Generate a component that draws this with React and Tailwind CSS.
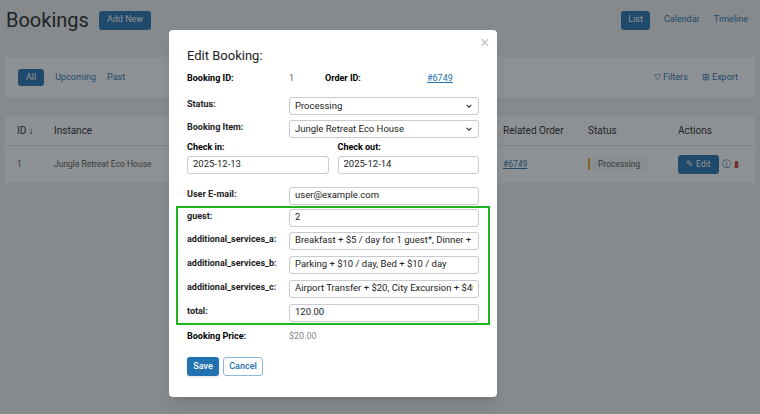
import React from "react";

const F = { fontFamily: "Roboto, 'Liberation Sans', sans-serif" };

function Field({ label, children, mb = "mb-[5px]" }) {
  return (
    <div className={"flex items-start h-[18px] " + mb}>
      <div className="w-[102px] shrink-0 text-[9px] font-bold text-[#222] pt-[1px] whitespace-nowrap">{label}</div>
      <div className="flex-1 min-w-0">{children}</div>
    </div>
  );
}
function Input({ v, sel }) {
  return (
    <div className="h-[18px] border border-[#c9cbcf] rounded-[3px] flex items-center px-[5px] text-[9.5px] text-[#222] overflow-hidden whitespace-nowrap min-w-0">
      <span className="flex-1 overflow-hidden">{v}</span>
      {sel && (
        <svg width="8" height="8" viewBox="0 0 10 10"><path d="M2 3.5l3 3 3-3" stroke="#333" strokeWidth="1.3" fill="none" /></svg>
      )}
    </div>
  );
}

export default function App() {
  return (
    <div style={F} className="relative w-[760px] h-[414px] bg-[#f0f0f1] overflow-hidden">
      <div className="flex items-center justify-between px-[6px] pt-[5px]">
        <div className="flex items-center gap-[10px]">
          <div className="text-[20px] text-[#1d2327]">Bookings</div>
          <div className="bg-[#2271b1] text-white text-[9px] rounded-[3px] px-[8px] h-[19px] flex items-center">Add New</div>
        </div>
        <div className="flex items-center gap-[14px] text-[9px] text-[#2271b1] pr-[6px]">
          <div className="bg-[#2271b1] text-white rounded-[3px] px-[7px] h-[19px] flex items-center">List</div>
          <span>Calendar</span><span>Timeline</span>
        </div>
      </div>
      <div className="mx-[5px] mt-[22px] h-[41px] bg-white rounded-[4px] flex items-center justify-between px-[13px] text-[9px] text-[#2271b1]">
        <div className="flex items-center gap-[11px]">
          <div className="bg-[#2271b1] text-white rounded-[3px] px-[8px] h-[17px] flex items-center">All</div>
          <span>Upcoming</span><span>Past</span>
        </div>
        <div className="flex gap-[14px] pr-[4px]"><span>▽ Filters</span><span>⊞ Export</span></div>
      </div>
      <div className="mx-[5px] mt-[18px] h-[67px] bg-white rounded-[4px] text-[10px] text-[#1d2327]">
        <div className="h-[30px] flex items-center px-[12px] border-b border-[#e5e5e5]">
          <span className="w-[37px]">ID ↓</span><span>Instance</span>
          <span className="ml-auto w-[85px]">Related Order</span><span className="w-[90px]">Status</span><span className="w-[65px]">Actions</span>
        </div>
        <div className="h-[36px] flex items-center px-[12px] text-[8.5px] text-[#555]">
          <span className="w-[37px]">1</span><span>Jungle Retreat Eco House</span>
          <span className="ml-auto w-[85px] text-[#2271b1] underline">#6749</span>
          <span className="w-[90px]"><span className="border-l-2 border-[#dba617] bg-[#f6f6f6] px-[8px] py-[1px]">Processing</span></span>
          <span className="w-[65px] flex items-center gap-[3px]"><span className="bg-[#2271b1] text-white rounded-[3px] px-[8px] h-[19px] flex items-center">✎ Edit</span><span className="text-[#2271b1]">ⓘ</span><span className="text-[#d63638]">▮</span></span>
        </div>
      </div>
      <div className="absolute inset-0 bg-[#1d2327]/50" />
      <div className="absolute left-[169px] top-[30px] w-[328px] h-[367px] bg-white rounded-[4px] shadow-lg px-[18px] pt-[16px]">
        <div className="absolute right-[8px] top-[5px] text-[#c5c5c5] text-[16px] leading-none">×</div>
        <div className="text-[13px] text-[#1d2327] mb-[6px]">Edit Booking:</div>
        <div className="flex text-[9px] mb-[12px]">
          <span className="w-[102px] font-bold">Booking ID:</span><span className="w-[36px] text-[#666]">1</span>
          <span className="w-[102px] font-bold">Order ID:</span><span className="text-[#2271b1] underline">#6749</span>
        </div>
        <Field label="Status:"><Input v="Processing" sel /></Field>
        <Field label="Booking Item:" mb="mb-[3px]"><Input v="Jungle Retreat Eco House" sel /></Field>
        <div className="flex gap-[9px] mb-[13px]">
          <div className="flex-1 min-w-0"><div className="text-[9px] font-bold mb-[1px]">Check in:</div><Input v="2025-12-13" /></div>
          <div className="flex-1 min-w-0"><div className="text-[9px] font-bold mb-[1px]">Check out:</div><Input v="2025-12-14" /></div>
        </div>
        <Field label="User E-mail:" mb="mb-[1px]"><Input v="user@example.com" /></Field>
        <div className="-mx-[11px] border-2 border-[#1fb51f] px-[9px] pt-[1px] mb-[5px]">
          <Field label="guest:"><Input v="2" /></Field>
          <Field label="additional_services_a:" mb="mb-[6px]"><Input v="Breakfast + $5 / day for 1 guest*, Dinner + $5 / day" /></Field>
          <Field label="additional_services_b:" mb="mb-[6px]"><Input v="Parking + $10 / day, Bed + $10 / day" /></Field>
          <Field label="additional_services_c:" mb="mb-[6px]"><Input v="Airport Transfer + $20, City Excursion + $40" /></Field>
          <Field label="total:" mb="mb-[1px]"><Input v="120.00" /></Field>
        </div>
        <div className="flex text-[9px] mb-[14px]"><span className="w-[102px] font-bold">Booking Price:</span><span className="text-[#888]">$20.00</span></div>
        <div className="flex gap-[4px] text-[9px]">
          <div className="bg-[#2271b1] text-white rounded-[3px] w-[32px] h-[19px] flex items-center justify-center font-medium shadow">Save</div>
          <div className="border border-[#8fb8d8] text-[#2271b1] rounded-[3px] w-[40px] h-[19px] flex items-center justify-center font-medium">Cancel</div>
        </div>
      </div>
    </div>
  );
}
